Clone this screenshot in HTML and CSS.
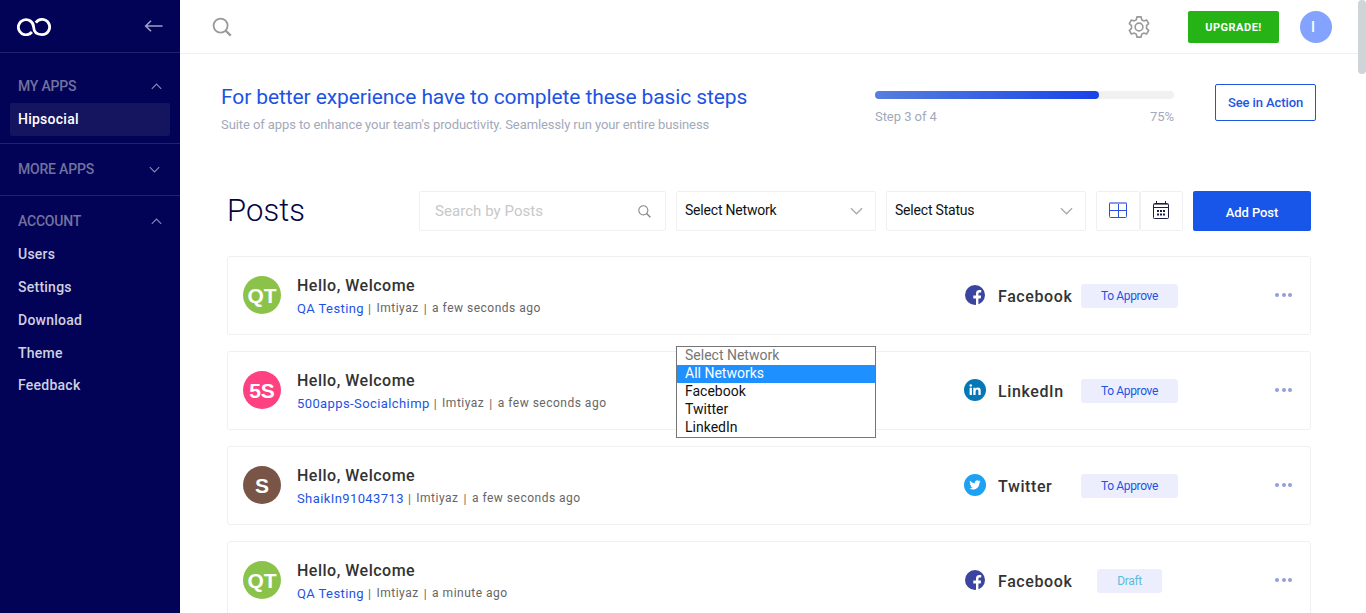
FILE: index.html
```html
<!DOCTYPE html>
<html lang="en">
<head>
<meta charset="utf-8">
<title>Hipsocial - Posts</title>
<link rel="stylesheet" href="styles.css">
</head>
<body>
<svg class="defs" width="0" height="0">
  <symbol id="facebook" viewBox="0 0 22 22"><circle cx="11" cy="11" r="10" fill="#3b459f"/><path d="M12 21v-6.600H9.300v-3H12V9.600Q12 6 15.300 6h1.900v2.600h-1.400Q14.400 8.600 14.400 10v1.400h2.700l-.4 3h-2.300V21z" fill="#fff"/></symbol>
  <symbol id="linkedin" viewBox="0 0 22 22"><circle cx="11" cy="11" r="11" fill="#0677b5"/><path d="M5.600 8.800h2.300v7.200H5.600zM9.300 8.800h2.200v1q.8-1.200 2.400-1.200 2.800 0 2.800 3.200V16h-2.300v-3.700q0-1.800-1.300-1.800-1.500 0-1.500 1.900V16H9.300z" fill="#fff"/><circle cx="6.750" cy="6.500" r="1.300" fill="#fff"/></symbol>
  <symbol id="twitter" viewBox="0 0 22 22"><circle cx="11" cy="11" r="11" fill="#1da1f2"/><path transform="translate(5.300 5.300) scale(.47)" d="M23.950 4.570a10 10 0 0 1-2.820.77 4.960 4.960 0 0 0 2.160-2.720c-.95.550-2 .95-3.130 1.180a4.920 4.920 0 0 0-8.380 4.480C7.690 8.100 4.070 6.130 1.640 3.160a4.820 4.820 0 0 0-.67 2.480c0 1.710.87 3.210 2.190 4.100a4.900 4.900 0 0 1-2.230-.62v.06a4.920 4.920 0 0 0 3.950 4.830 5 5 0 0 1-2.210.08 4.940 4.940 0 0 0 4.600 3.420A9.870 9.870 0 0 1 0 19.540a14 14 0 0 0 7.550 2.210c9.050 0 14-7.500 14-13.990 0-.21 0-.42-.02-.63a9.940 9.940 0 0 0 2.460-2.550z" fill="#fff"/></symbol>
  <symbol id="chevron" viewBox="0 0 14 8"><path d="M1 1l6 6 6-6" fill="none" stroke="currentColor" stroke-width="1.400"/></symbol>
</svg>
<div class="app">
  <aside class="sidebar">
    <div class="brand">
      <svg class="logo" viewBox="0 0 34 18" width="34" height="18" fill="none" stroke="#fff" stroke-width="2.800"><path d="M14.900 14A7.600 7.600 0 1 1 16.600 9Q17 16.600 25 16.600A7.600 7.600 0 1 0 18.800 4.600"/></svg>
      <svg class="back" viewBox="0 0 19 12" width="19" height="12" fill="none" stroke="#9f9fc9" stroke-width="1.600"><path d="M18.500 6H1.500M7 .8L1.700 6 7 11.200"/></svg>
    </div>
    <section class="group group-apps">
      <h3 class="group-title">MY APPS<svg class="caret up"><use href="#chevron"/></svg></h3>
      <a class="active">Hipsocial</a>
    </section>
    <section class="group group-more">
      <h3 class="group-title">MORE APPS<svg class="caret"><use href="#chevron"/></svg></h3>
    </section>
    <section class="group group-account">
      <h3 class="group-title">ACCOUNT<svg class="caret up"><use href="#chevron"/></svg></h3>
      <nav class="links"><a>Users</a><a>Settings</a><a>Download</a><a>Theme</a><a>Feedback</a></nav>
    </section>
  </aside>
  <main class="main">
    <header class="topbar">
      <svg class="find" viewBox="0 0 20 20" width="20" height="20" fill="none" stroke="#999" stroke-width="1.800"><circle cx="8.600" cy="8.600" r="7"/><path d="M13.600 13.600l5.200 5" stroke-width="2.200"/></svg>
      <div class="account">
        <svg viewBox="0 0 24 24" width="24" height="24" fill="none" stroke="#999" stroke-width="1.600"><circle cx="12" cy="12" r="3.900"/><path d="M9.900 1.900h4.200l.6 2.900 2 1.100 2.900-.9 2.100 3.600-2.200 2v2.800l2.200 2-2.100 3.600-2.900-.9-2 1.100-.6 2.900H9.900l-.6-2.900-2-1.100-2.900.9-2.100-3.600 2.200-2v-2.800l-2.200-2L4.400 5l2.900.9 2-1.100z" stroke-linejoin="round"/></svg>
        <button class="upgrade">UPGRADE!</button>
        <span class="user">I</span>
      </div>
    </header>
    <section class="steps">
      <div class="steps-copy">
        <h2 class="steps-title">For better experience have to complete these basic steps</h2>
        <p class="steps-text">Suite of apps to enhance your team's productivity. Seamlessly run your entire business</p>
      </div>
      <div class="progress">
        <div class="track"><div class="fill"></div></div>
        <div class="progress-labels"><span>Step 3 of 4</span><span>75%</span></div>
      </div>
      <button class="see">See in Action</button>
    </section>
    <section class="toolbar">
      <h1 class="heading">Posts</h1>
      <div class="search"><span>Search by Posts</span><svg viewBox="0 0 20 20" width="13" height="13" fill="none" stroke="#888" stroke-width="1.700"><circle cx="8.200" cy="8.200" r="7"/><path d="M13.200 13.200l5.800 5.800" stroke-width="2.200"/></svg></div>
      <div class="select"><span>Select Network</span><svg class="arrow"><use href="#chevron"/></svg>
        <div class="menu"><div class="hint">Select Network</div><div class="hover">All Networks</div><div>Facebook</div><div>Twitter</div><div>LinkedIn</div></div>
      </div>
      <div class="select"><span>Select Status</span><svg class="arrow"><use href="#chevron"/></svg></div>
      <div class="views">
        <div class="view"><svg viewBox="0 0 18 16" width="18" height="16" fill="none" stroke="#2b50dd"><rect x=".5" y=".5" width="17" height="15" rx="1"/><path d="M9.500 1v14M1 8.500h16"/><path d="M1 1h16" stroke="#8d98e6" stroke-width="2"/></svg></div>
        <div class="view"><svg viewBox="0 0 18 18" width="18" height="18" fill="none" stroke="#1c1c45"><rect x="1.500" y="2.500" width="15" height="15" rx="1"/><path d="M4.500 0v3M13.500 0v3M2 6.500h14"/><path d="M2 3.500h14" stroke="#77778f"/><path d="M5 10h8M5 13.500h8" stroke-width="2" stroke-dasharray="2 1"/></svg></div>
      </div>
      <button class="add">Add Post</button>
    </section>
    <section class="posts">
      <article class="post">
        <span class="avatar green">QT</span>
        <div class="info"><h4 class="post-title">Hello, Welcome</h4><p class="meta"><a>QA Testing</a><i>|</i><span>Imtiyaz</span><i>|</i><span>a few seconds ago</span></p></div>
        <svg class="net"><use href="#facebook"/></svg><span class="net-name">Facebook</span>
        <span class="badge">To Approve</span><span class="dots"><b></b><b></b><b></b></span>
      </article>
      <article class="post">
        <span class="avatar pink">5S</span>
        <div class="info"><h4 class="post-title">Hello, Welcome</h4><p class="meta"><a>500apps-Socialchimp</a><i>|</i><span>Imtiyaz</span><i>|</i><span>a few seconds ago</span></p></div>
        <svg class="net"><use href="#linkedin"/></svg><span class="net-name">LinkedIn</span>
        <span class="badge">To Approve</span><span class="dots"><b></b><b></b><b></b></span>
      </article>
      <article class="post">
        <span class="avatar brown">S</span>
        <div class="info"><h4 class="post-title">Hello, Welcome</h4><p class="meta"><a>ShaikIn91043713</a><i>|</i><span>Imtiyaz</span><i>|</i><span>a few seconds ago</span></p></div>
        <svg class="net"><use href="#twitter"/></svg><span class="net-name">Twitter</span>
        <span class="badge">To Approve</span><span class="dots"><b></b><b></b><b></b></span>
      </article>
      <article class="post">
        <span class="avatar green">QT</span>
        <div class="info"><h4 class="post-title">Hello, Welcome</h4><p class="meta"><a>QA Testing</a><i>|</i><span>Imtiyaz</span><i>|</i><span>a minute ago</span></p></div>
        <svg class="net"><use href="#facebook"/></svg><span class="net-name">Facebook</span>
        <span class="badge draft">Draft</span><span class="dots"><b></b><b></b><b></b></span>
      </article>
    </section>
  </main>
  <div class="scrollbar"><div class="thumb"></div></div>
</div>
</body>
</html>
```
FILE: styles.css
```css
* { box-sizing: border-box; }
body { margin: 0; font-family: Roboto, sans-serif; background: #fff; overflow: hidden; }
h1, h2, h3, h4, p { margin: 0; }
button { font-family: inherit; padding: 0; border: 0; }
svg { display: block; flex: none; }
.defs { position: absolute; }
.app { display: flex; height: 613px; overflow: hidden; }

/* Sidebar */
.sidebar { width: 180px; flex: none; background: #020257; }
.brand { height: 53px; display: flex; justify-content: space-between; padding: 18px 17px 0; border-bottom: 1px solid #22226c; }
.back { margin-top: 2px; }
.group { padding: 0 10px; border-bottom: 1px solid #22226c; }
.group-apps { height: 91px; padding-top: 17px; }
.group-more { height: 52px; padding-top: 9px; }
.group-account { padding-top: 9px; border: 0; }
.group-title { height: 33px; padding: 0 8px 2px; display: flex; align-items: center; justify-content: space-between; font-size: 14px; font-weight: 500; letter-spacing: -.2px; color: #72729f; }
.caret { width: 11px; height: 7px; color: #8a8ab3; margin: 2px 2px 0 0; }
.caret.up { transform: rotate(180deg); margin-right: 0; }
.active, .links a { display: block; padding: 0 8px; font-size: 14px; font-weight: 500; letter-spacing: .25px; }
.active { height: 33px; line-height: 32px; background: #14145f; border-radius: 2px; color: #fff; }
.links a { height: 32.850px; line-height: 32.850px; color: #d0d0e0; }

/* Top bar */
.main { flex: 1; min-width: 0; }
.topbar { height: 54px; padding: 0 26px 0 32px; display: flex; align-items: center; justify-content: space-between; border-bottom: 1px solid #efefef; }
.account { display: flex; align-items: center; }
.upgrade { width: 91px; height: 32px; padding-top: 1px; margin-left: 37px; border-radius: 2px; background: #25b316; color: #fff; font-size: 11px; font-weight: 700; letter-spacing: .5px; }
.user { width: 32px; height: 32px; margin-left: 21px; border-radius: 50%; background: #84a3ff; color: #fff; font-size: 14px; font-weight: 500; line-height: 32px; padding-left: 11px; }

/* Onboarding steps */
.steps { height: 137px; padding: 30px 42px 0 41px; display: flex; }
.steps-copy { width: 654px; }
.steps-title { font-size: 21px; line-height: 26px; font-weight: 400; color: #1d53e4; letter-spacing: -.1px; }
.steps-text { margin-top: 6px; font-size: 13px; line-height: 18px; letter-spacing: -.09px; color: #a3a9bb; }
.progress { width: 299px; padding-top: 7px; }
.track { height: 8px; border-radius: 4px; background: #f1f1f1; }
.fill { width: 75%; height: 8px; border-radius: 4px; background: linear-gradient(90deg, #567fdd, #1a43e8); }
.progress-labels { display: flex; justify-content: space-between; margin-top: 9px; font-size: 13px; line-height: 18px; letter-spacing: -.05px; color: #a3a9bb; }
.see { width: 101px; height: 37px; margin-left: 41px; border: 1px solid #1f56e0; border-radius: 2px; background: #fff; color: #1f56e0; font-size: 13px; font-weight: 500; letter-spacing: -.1px; }

/* Filters */
.toolbar { display: flex; height: 65px; padding-left: 47px; align-items: flex-start; }
.heading { width: 192px; font-size: 31px; line-height: 40px; font-weight: 300; letter-spacing: .1px; color: #04043f; }
.search, .select, .view { height: 40px; border: 1px solid #f0f0f0; border-radius: 2px; display: flex; align-items: center; justify-content: space-between; }
.search { width: 247px; margin-right: 10px; padding: 0 14px 0 15px; font-size: 15px; letter-spacing: .05px; color: #c8c8c8; }
.select { position: relative; width: 200px; margin-right: 10px; padding: 0 12px 2px 8px; font-size: 14px; color: #111; }
.select > span { letter-spacing: -.2px; }
.arrow { width: 13px; height: 8px; margin-top: 2px; color: #aaa; }
.menu { position: absolute; z-index: 2; left: -1px; top: 154px; width: 200px; height: 92px; border: 1px solid #767676; background: #fff; line-height: 16px; }
.menu div { padding-left: 8px; height: 18px; }
.menu .hint { color: #767676; }
.menu .hover { background: #1e90ff; color: #fff; }
.views { display: flex; margin-right: 10px; }
.view { width: 44px; padding-bottom: 2px; justify-content: center; }
.view + .view { width: 43px; padding-right: 1px; }
.add { width: 118px; height: 40px; padding-top: 3px; border-radius: 2px; background: #1756e8; color: #fff; font-size: 13px; font-weight: 500; letter-spacing: -.1px; }

/* Post list */
.posts { padding-left: 47px; width: 1131px; display: grid; gap: 16px; }
.post { height: 79px; border: 1px solid #f0f0f0; border-radius: 3px; padding: 0 18px 2px 15px; display: grid; grid-template-columns: 54px 667px 34px 83px 97px 1fr; align-items: center; }
.avatar { width: 38px; height: 38px; border-radius: 50%; color: #fff; font-family: "Liberation Sans", sans-serif; font-weight: 700; font-size: 21px; line-height: 40px; text-align: center; }
.green { background: #8bc34a; }
.pink { background: #ff4081; }
.brown { background: #795548; }
.info { padding-top: 6px; }
.post-title { font-size: 16px; line-height: 20px; font-weight: 500; letter-spacing: .5px; color: #333; }
.meta { display: flex; margin-top: 3px; font-size: 12px; line-height: 18px; letter-spacing: .5px; color: #666; }
.meta a { font-size: 13px; line-height: 20px; letter-spacing: .4px; color: #1d53e4; }
.meta i { font-style: normal; line-height: 20px; margin: 0 5px 0 4px; }
.meta span + i { margin-right: 5px; margin-left: 5px; }
.net { width: 22px; height: 22px; }
.net-name { padding-top: 3px; font-size: 16px; font-weight: 500; letter-spacing: .6px; color: #333; }
.badge { justify-self: center; height: 24px; margin-top: 2px; padding: 0 20px; border-radius: 3px; background: #eceefe; font-size: 12px; line-height: 24px; letter-spacing: -.35px; color: #1d53e4; white-space: nowrap; }
.badge.draft { color: #5bbcdd; }
.dots { display: flex; gap: 2.500px; justify-content: flex-end; }
.dots b { width: 4px; height: 4px; border-radius: 50%; background: #929ee0; }

/* Page scrollbar */
.scrollbar { width: 8px; flex: none; }
.thumb { height: 74px; border-radius: 4px; background: #ced4d7; }
```
